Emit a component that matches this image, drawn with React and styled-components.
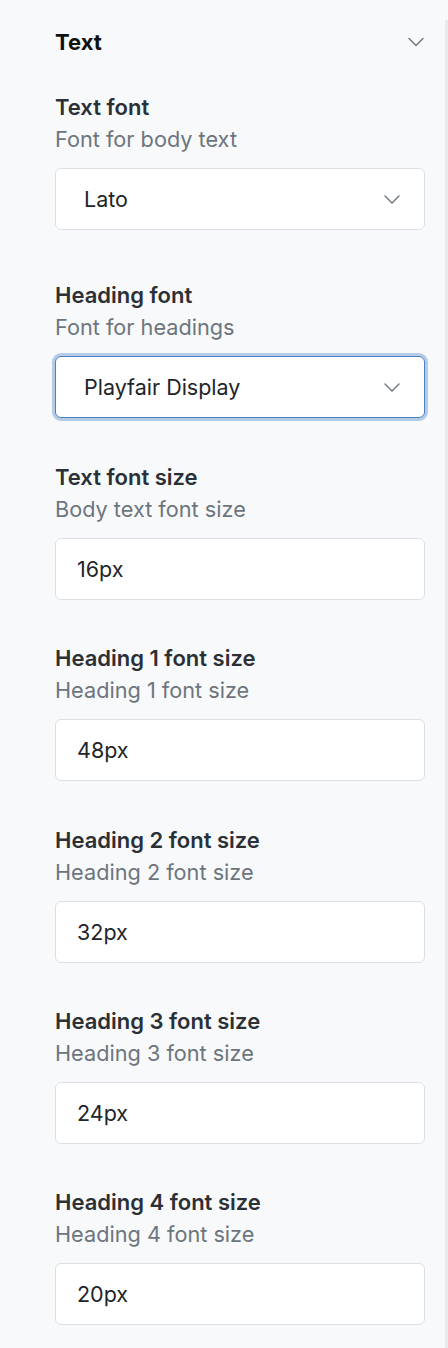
import React from 'react'
import styled, { createGlobalStyle } from 'styled-components'

const GlobalStyle = createGlobalStyle`
  html, body {
    margin: 0;
    padding: 0;
    background: #f8f9fa;
  }
  body {
    font-family: Inter, "Liberation Sans", Arial, sans-serif;
    -webkit-font-smoothing: antialiased;
  }
`

const Page = styled.div`
  display: flex;
  min-height: 1348px;
  background: #f8f9fa;
`

const Panel = styled.div`
  flex: 1;
  padding: 28px 20px 0 55px;
`

const ScrollTrack = styled.div`
  width: 3px;
  margin-top: 20px;
  background: #e9eaec;
`

const Header = styled.div`
  display: flex;
  align-items: center;
  justify-content: space-between;
  height: 28px;
  margin-bottom: 33px;
`

const Title = styled.h2`
  margin: 0;
  font-size: 22px;
  font-weight: 700;
  color: #111;
`

const HeaderChevron = styled.svg`
  width: 16px;
  height: 10px;
  margin-right: 1px;
  color: #6c757d;
`

const Field = styled.div`
  margin-bottom: ${(p) => p.$gap}px;
`

const Label = styled.div`
  padding-top: 2px;
  font-size: 22px;
  line-height: 32px;
  font-weight: 600;
  color: #2b3036;
`

const Desc = styled.div`
  font-size: 21.7px;
  line-height: 32px;
  color: #6c757d;
  margin-bottom: 13px;
`

const SelectBox = styled.div`
  box-sizing: border-box;
  height: 62px;
  display: flex;
  align-items: center;
  justify-content: space-between;
  padding: 0 24px 0 28px;
  background: #fff;
  border: 1px solid ${(p) => (p.$focused ? '#4a80c8' : '#dcdfe3')};
  border-radius: 6px;
  box-shadow: ${(p) => (p.$focused ? '0 0 0 3px #b6cbe6' : 'none')};
  font-size: 21.5px;
  color: #212529;
`

const SelectChevron = styled.svg`
  width: 16px;
  height: 9px;
  color: #6c757d;
`

const TextInput = styled.input`
  box-sizing: border-box;
  display: block;
  width: 100%;
  height: 62px;
  padding: 0 21px;
  background: #fff;
  border: 1px solid #dcdfe3;
  border-radius: 6px;
  font-family: inherit;
  font-size: 21.5px;
  color: #212529;
  outline: none;
`

const Chevron = ({ as: Comp }) => (
  <Comp viewBox="0 0 16 9" fill="none">
    <path d="M1 1l7 7 7-7" stroke="currentColor" strokeWidth="1.4" strokeLinecap="round" strokeLinejoin="round" />
  </Comp>
)

const sizes = [
  { label: 'Text font size', desc: 'Body text font size', value: '16px' },
  { label: 'Heading 1 font size', desc: 'Heading 1 font size', value: '48px' },
  { label: 'Heading 2 font size', desc: 'Heading 2 font size', value: '32px' },
  { label: 'Heading 3 font size', desc: 'Heading 3 font size', value: '24px' },
  { label: 'Heading 4 font size', desc: 'Heading 4 font size', value: '20px' },
]

const App = () => {
  return (
    <Page>
      <GlobalStyle />
      <Panel>
        <Header>
          <Title>Text</Title>
          <Chevron as={HeaderChevron} />
        </Header>

        <Field $gap={47}>
          <Label>Text font</Label>
          <Desc>Font for body text</Desc>
          <SelectBox>
            <span>Lato</span>
            <Chevron as={SelectChevron} />
          </SelectBox>
        </Field>

        <Field $gap={41}>
          <Label>Heading font</Label>
          <Desc>Font for headings</Desc>
          <SelectBox $focused>
            <span>Playfair Display</span>
            <Chevron as={SelectChevron} />
          </SelectBox>
        </Field>

        {sizes.map((s) => (
          <Field key={s.label} $gap={40.25}>
            <Label>{s.label}</Label>
            <Desc>{s.desc}</Desc>
            <TextInput defaultValue={s.value} />
          </Field>
        ))}
      </Panel>
      <ScrollTrack />
    </Page>
  )
}

export default App
